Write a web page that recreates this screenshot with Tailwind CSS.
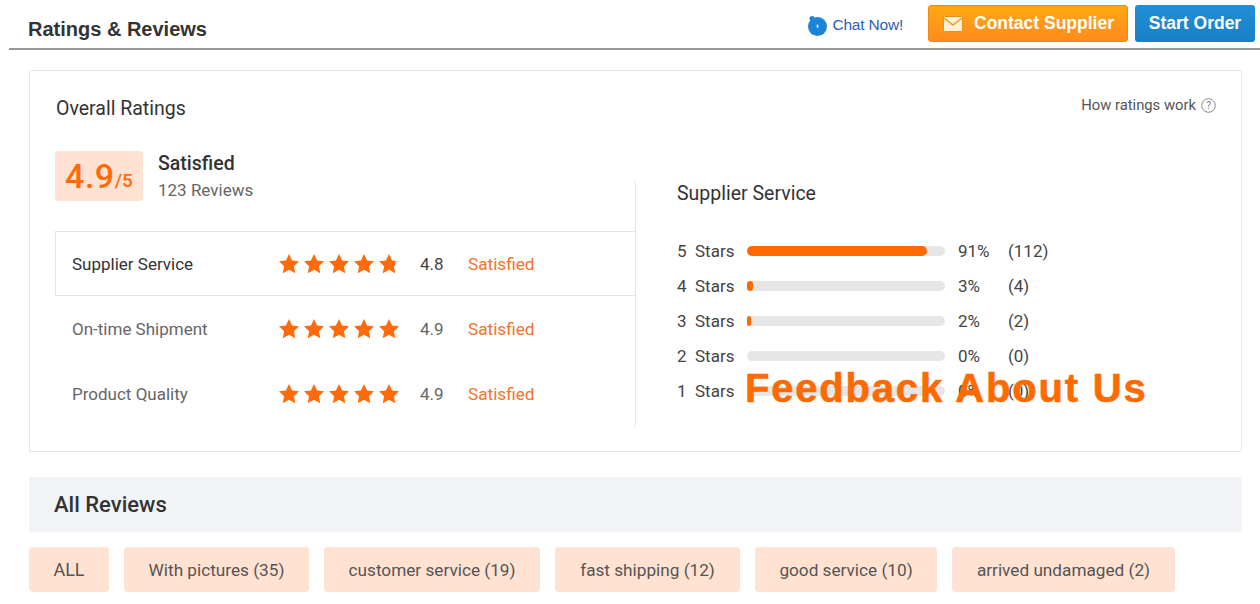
<!DOCTYPE html>
<html lang="en">
<head>
    <meta charset="UTF-8">
    <title>Ratings &amp; Reviews</title>
    <script src="https://cdn.jsdelivr.net/npm/@tailwindcss/browser@4"></script>
</head>
<body class="bg-white font-['Roboto',sans-serif] text-[#333] overflow-hidden">
    <svg class="absolute h-0 w-0">
        <defs>
            <linearGradient id="star-part">
                <stop offset="80%" stop-color="#ff6a0b"/>
                <stop offset="80%" stop-color="#d0d0d0"/>
            </linearGradient>
        </defs>
        <symbol id="star" viewBox="0 0 24 24"><path d="M12 0l3.7 7.7 8.3 1.1-6.1 5.8 1.6 8.400L12 19l-7.500 4 1.600-8.400L0 8.800l8.300-1.100z"/></symbol>
    </svg>

    <div class="relative h-[604px] w-[1260px]">
        <!-- Header -->
        <div class="ml-[9px] flex h-[50px] items-start border-b-2 border-[#999] pl-[19px]">
            <h1 class="mt-[16px] font-['Liberation_Sans',sans-serif] text-[20px] leading-[26px] font-bold text-[#333]">Ratings &amp; Reviews</h1>
            <div class="ml-auto flex items-start pr-[5px]">
                <div class="mt-[13px] mr-[25px] flex items-center gap-[4px]">
                    <svg class="h-[21px] w-[21px]" viewBox="0 0 21 21">
                        <circle cx="10.500" cy="11.500" r="9.500" fill="#1a85d6"/>
                        <circle cx="5" cy="3.500" r="2.500" fill="#1a85d6"/>
                        <rect x="9.800" y="9.500" width="1.500" height="3.500" rx="0.700" fill="#fff"/>
                    </svg>
                    <span class="font-['Liberation_Sans',sans-serif] text-[15.500px] leading-[24px] tracking-[-0.2px] text-[#2a62b0]">Chat Now!</span>
                </div>
                <button class="mt-[5px] flex h-[37px] w-[200px] items-center rounded-[3px] border border-[#f08a10] bg-gradient-to-b from-[#ffa90f] to-[#ff8a1e] pl-[14px] font-['Liberation_Sans',sans-serif] text-[17.500px] font-bold text-white">
                    <svg class="mr-[11px] h-[16px] w-[20px] shrink-0" viewBox="0 0 20 16">
                        <rect x="0.500" y="0.500" width="19" height="15" rx="1" fill="#fff1d8" stroke="#e98f1c"/>
                        <path d="M1 2l9 7 9-7" fill="none" stroke="#f39a1d" stroke-width="1.500"/>
                    </svg>
                    Contact Supplier
                </button>
                <button class="mt-[5px] ml-[7px] h-[37px] w-[120px] rounded-[3px] bg-gradient-to-b from-[#1f8fd8] to-[#1a7fc6] font-['Liberation_Sans',sans-serif] text-[17.500px] font-bold text-white">Start Order</button>
            </div>
        </div>

        <!-- Overall ratings card -->
        <div class="mt-[20px] ml-[29px] h-[382px] w-[1213px] border border-[#e8e8e8]">
            <div class="flex items-start justify-between pt-[25px] pr-[25px] pl-[26px]">
                <h2 class="text-[19.500px] leading-[26px] text-[#333]">Overall Ratings</h2>
                <div class="flex items-center gap-[5px] text-[14.800px] leading-[18px] text-[#555]">
                    How ratings work
                    <svg class="h-[15px] w-[15px]" viewBox="0 0 15 15">
                        <circle cx="7.500" cy="7.500" r="6.800" fill="none" stroke="#888"/>
                        <text x="7.500" y="11" text-anchor="middle" font-size="10" fill="#777">?</text>
                    </svg>
                </div>
            </div>

            <div class="flex">
                <!-- Left column -->
                <div class="ml-[25px] w-[580px]">
                    <div class="mt-[29px] flex items-start">
                        <div class="flex h-[50px] w-[88px] items-center justify-center rounded-[4px] bg-[#ffe2d1] font-medium text-[#ff6a0b]">
                            <span class="text-[34px] leading-none tracking-[0.5px]">4.9</span><span class="mt-[9px] text-[19px] leading-none">/5</span>
                        </div>
                        <div class="ml-[15px]">
                            <div class="pt-[1px] text-[19.500px] leading-[24px] font-medium text-[#333]">Satisfied</div>
                            <div class="mt-[4px] text-[17px] leading-[20px] text-[#666]">123 Reviews</div>
                        </div>
                    </div>

                    <div class="mt-[30px]">
                        <div class="flex h-[65px] items-center border-y border-l border-[#e5e5e5] pl-[16px]">
                            <span class="w-[207px] pt-[2px] text-[17px] text-[#333]">Supplier Service</span>
                            <div class="flex w-[122px] gap-[5px] fill-[#ff6a0b]">
                                <svg class="h-[20px] w-[20px]"><use href="#star"/></svg>
                                <svg class="h-[20px] w-[20px]"><use href="#star"/></svg>
                                <svg class="h-[20px] w-[20px]"><use href="#star"/></svg>
                                <svg class="h-[20px] w-[20px]"><use href="#star"/></svg>
                                <svg class="h-[20px] w-[20px] fill-[url(#star-part)]"><use href="#star"/></svg>
                            </div>
                            <span class="ml-[19px] w-[48px] pt-[2px] text-[17px] text-[#444]">4.8</span>
                            <span class="pt-[2px] text-[17.200px] text-[#f4722b]">Satisfied</span>
                        </div>
                        <div class="flex h-[65px] items-center pl-[17px]">
                            <span class="w-[207px] pt-[2px] text-[17px] text-[#666]">On-time Shipment</span>
                            <div class="flex w-[122px] gap-[5px] fill-[#ff6a0b]">
                                <svg class="h-[20px] w-[20px]"><use href="#star"/></svg>
                                <svg class="h-[20px] w-[20px]"><use href="#star"/></svg>
                                <svg class="h-[20px] w-[20px]"><use href="#star"/></svg>
                                <svg class="h-[20px] w-[20px]"><use href="#star"/></svg>
                                <svg class="h-[20px] w-[20px]"><use href="#star"/></svg>
                            </div>
                            <span class="ml-[19px] w-[48px] pt-[2px] text-[17px] text-[#666]">4.9</span>
                            <span class="pt-[2px] text-[17.200px] text-[#f4722b]">Satisfied</span>
                        </div>
                        <div class="flex h-[65px] items-center pl-[17px]">
                            <span class="w-[207px] pt-[2px] text-[17px] text-[#666]">Product Quality</span>
                            <div class="flex w-[122px] gap-[5px] fill-[#ff6a0b]">
                                <svg class="h-[20px] w-[20px]"><use href="#star"/></svg>
                                <svg class="h-[20px] w-[20px]"><use href="#star"/></svg>
                                <svg class="h-[20px] w-[20px]"><use href="#star"/></svg>
                                <svg class="h-[20px] w-[20px]"><use href="#star"/></svg>
                                <svg class="h-[20px] w-[20px]"><use href="#star"/></svg>
                            </div>
                            <span class="ml-[19px] w-[48px] pt-[2px] text-[17px] text-[#666]">4.9</span>
                            <span class="pt-[2px] text-[17.200px] text-[#f4722b]">Satisfied</span>
                        </div>
                    </div>
                </div>

                <!-- Right column -->
                <div class="mt-[59px] h-[246px] border-l border-[#e5e5e5] pl-[41px]">
                    <h2 class="pt-[1px] text-[19.500px] leading-[24px] text-[#333]">Supplier Service</h2>
                    <div class="mt-[35px] flex flex-col gap-[15px] text-[17px] leading-[20px] text-[#444]">
                        <div class="flex items-center">
                            <span class="w-[70px]">5&nbsp; Stars</span>
                            <div class="h-[10px] w-[198px] rounded-full bg-[#e6e6e6]"><div class="h-full rounded-full bg-[#ff6a00]" style="width: 91%"></div></div>
                            <span class="ml-[13px] w-[50px]">91%</span><span>(112)</span>
                        </div>
                        <div class="flex items-center">
                            <span class="w-[70px]">4&nbsp; Stars</span>
                            <div class="h-[10px] w-[198px] rounded-full bg-[#e6e6e6]"><div class="h-full rounded-full bg-[#ff6a00]" style="width: 3%"></div></div>
                            <span class="ml-[13px] w-[50px]">3%</span><span>(4)</span>
                        </div>
                        <div class="flex items-center">
                            <span class="w-[70px]">3&nbsp; Stars</span>
                            <div class="h-[10px] w-[198px] rounded-full bg-[#e6e6e6]"><div class="h-full rounded-full bg-[#ff6a00]" style="width: 2%"></div></div>
                            <span class="ml-[13px] w-[50px]">2%</span><span>(2)</span>
                        </div>
                        <div class="flex items-center">
                            <span class="w-[70px]">2&nbsp; Stars</span>
                            <div class="h-[10px] w-[198px] rounded-full bg-[#e6e6e6]"></div>
                            <span class="ml-[13px] w-[50px]">0%</span><span>(0)</span>
                        </div>
                        <div class="flex items-center">
                            <span class="w-[70px]">1&nbsp; Stars</span>
                            <div class="h-[10px] w-[198px] rounded-full bg-[#e6e6e6]"></div>
                            <span class="ml-[13px] w-[50px]">0%</span><span>(0)</span>
                        </div>
                    </div>
                </div>
            </div>
        </div>

        <!-- All reviews -->
        <div class="mt-[25px] ml-[29px] flex h-[55px] w-[1213px] items-center bg-[#f2f3f7] pl-[25px] text-[22px] font-medium text-[#333]">All Reviews</div>
        <div class="mt-[15px] ml-[29px] flex gap-[15px] text-[17.200px] text-[#555]">
            <div class="flex h-[45px] w-[80px] items-center justify-center rounded-[4px] bg-[#ffe2d1] text-[18px]">ALL</div>
            <div class="flex h-[45px] w-[185px] items-center justify-center rounded-[4px] bg-[#ffe2d1] pt-[2px]">With pictures (35)</div>
            <div class="flex h-[45px] w-[216px] items-center justify-center rounded-[4px] bg-[#ffe2d1] pt-[2px]">customer service (19)</div>
            <div class="flex h-[45px] w-[185px] items-center justify-center rounded-[4px] bg-[#ffe2d1] pt-[2px]">fast shipping (12)</div>
            <div class="flex h-[45px] w-[182px] items-center justify-center rounded-[4px] bg-[#ffe2d1] pt-[2px]">good service (10)</div>
            <div class="flex h-[45px] w-[223px] items-center justify-center rounded-[4px] bg-[#ffe2d1] pt-[2px]">arrived undamaged (2)</div>
        </div>

        <!-- Overlay caption -->
        <div class="absolute top-[365px] left-[745px] font-['Liberation_Sans',sans-serif] text-[40px] leading-[46px] font-bold tracking-[1.800px] whitespace-nowrap text-[#ff6a00] [-webkit-text-stroke:0.6px_#ff6a00]">Feedback About Us</div>
    </div>
</body>
</html>
